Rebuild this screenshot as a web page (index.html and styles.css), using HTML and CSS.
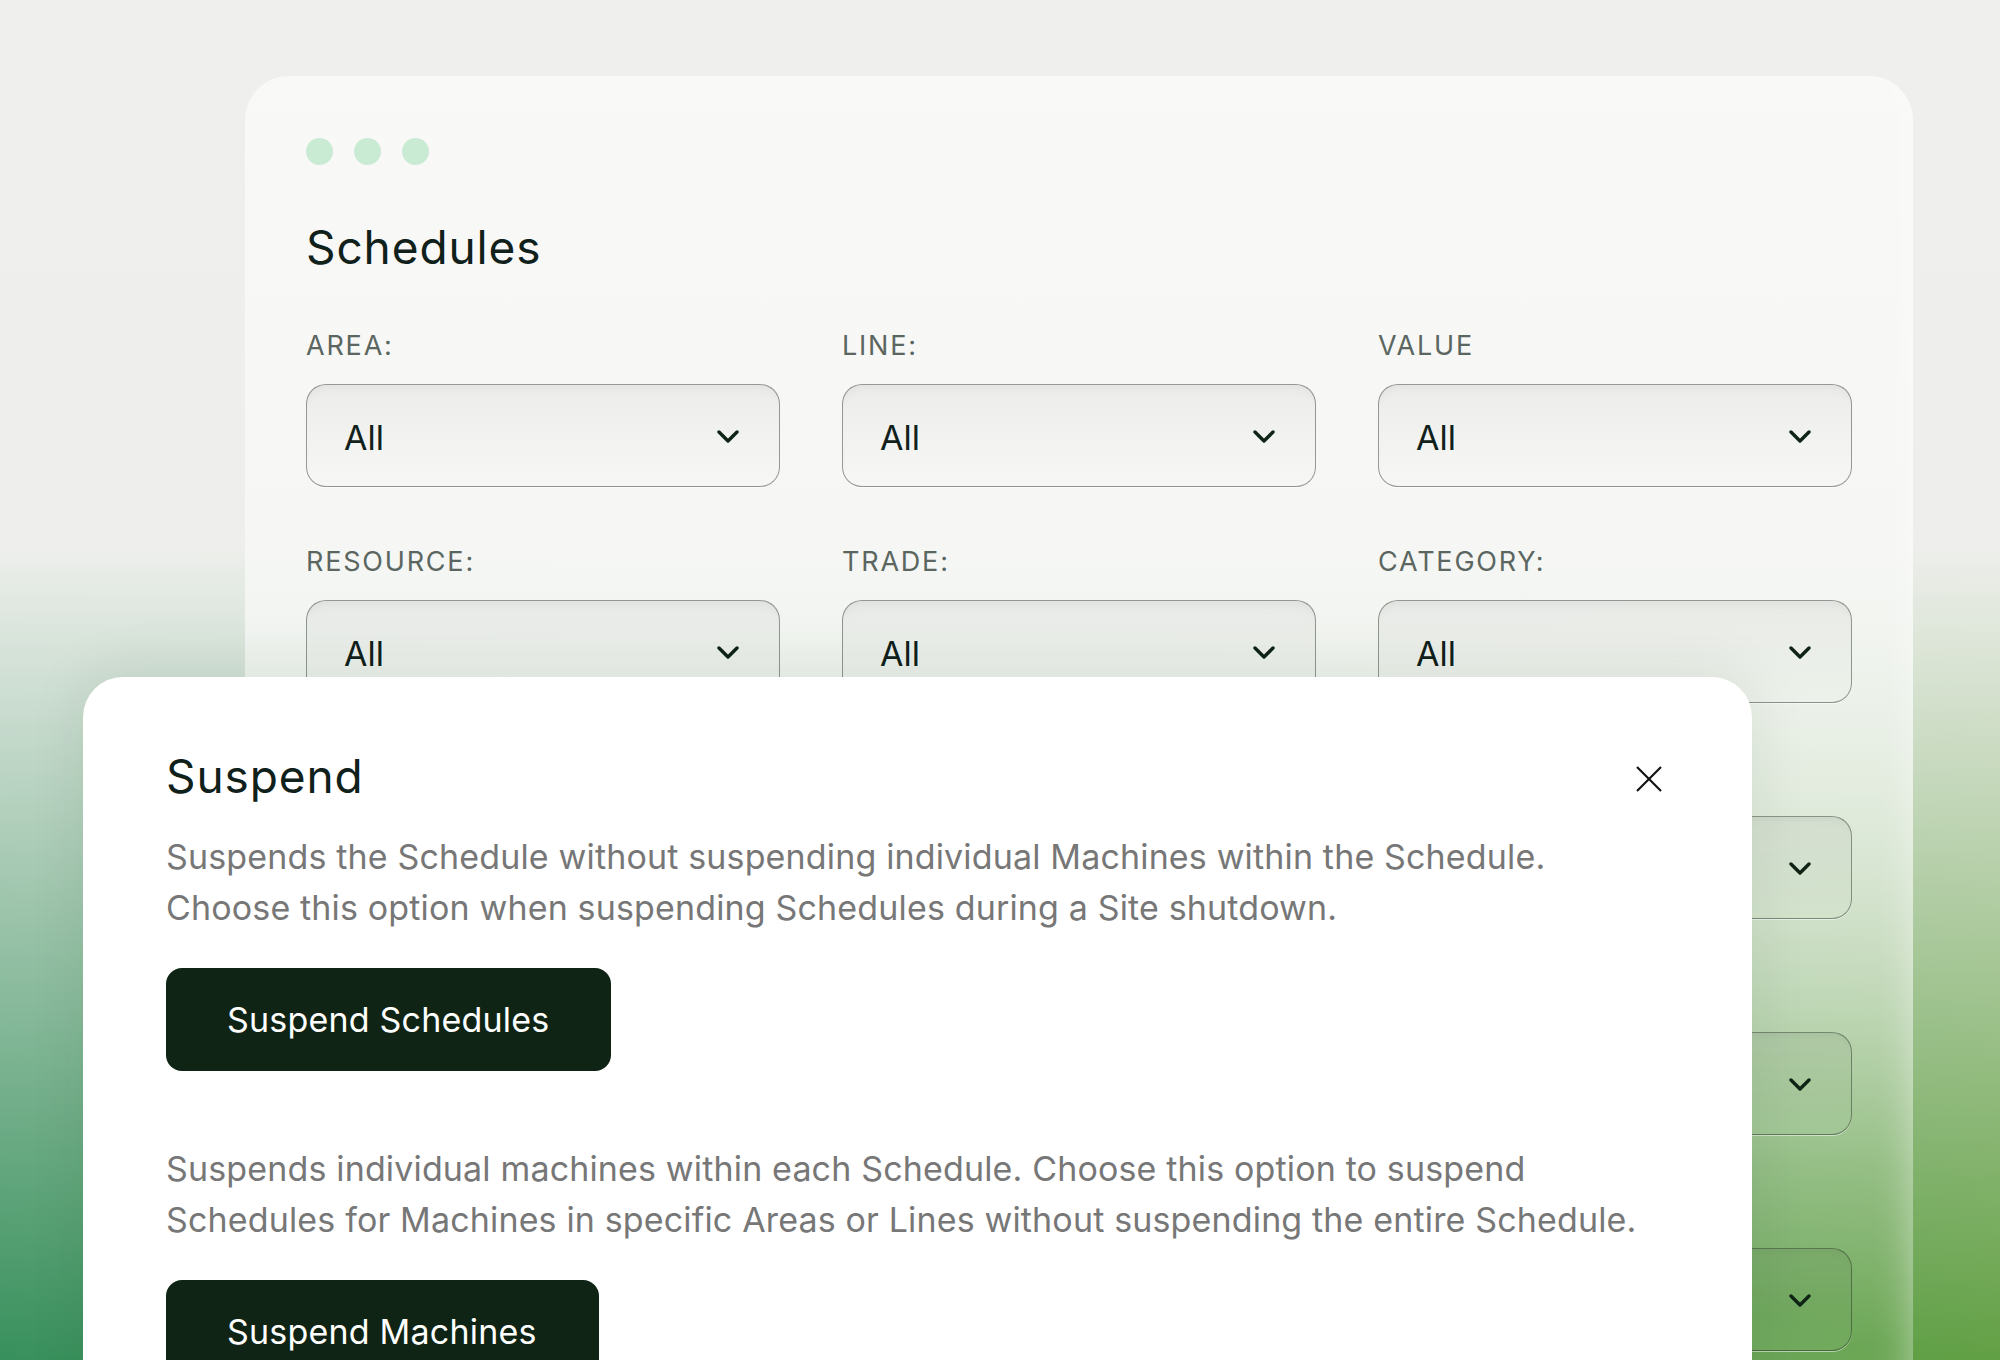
FILE: index.html
```html
<!DOCTYPE html>
<html lang="en">
<head>
    <meta charset="UTF-8">
    <meta name="viewport" content="width=device-width, initial-scale=1.0">
    <title>Schedules - Suspend</title>
    <link rel="stylesheet" href="styles.css">
</head>
<body>
    <div class="stage">
        <section class="window">
            <div class="window-dots">
                <span class="dot"></span>
                <span class="dot"></span>
                <span class="dot"></span>
            </div>

            <h1 class="window-title">Schedules</h1>

            <div class="filters">
                <div class="filter">
                    <div class="filter-label">AREA:</div>
                    <div class="select"><span>All</span><svg class="chevron" viewBox="0 0 22 13"><polyline points="2 2 11 11 20 2"></polyline></svg></div>
                </div>
                <div class="filter">
                    <div class="filter-label">LINE:</div>
                    <div class="select"><span>All</span><svg class="chevron" viewBox="0 0 22 13"><polyline points="2 2 11 11 20 2"></polyline></svg></div>
                </div>
                <div class="filter">
                    <div class="filter-label">VALUE</div>
                    <div class="select"><span>All</span><svg class="chevron" viewBox="0 0 22 13"><polyline points="2 2 11 11 20 2"></polyline></svg></div>
                </div>

                <div class="filter">
                    <div class="filter-label">RESOURCE:</div>
                    <div class="select"><span>All</span><svg class="chevron" viewBox="0 0 22 13"><polyline points="2 2 11 11 20 2"></polyline></svg></div>
                </div>
                <div class="filter">
                    <div class="filter-label">TRADE:</div>
                    <div class="select"><span>All</span><svg class="chevron" viewBox="0 0 22 13"><polyline points="2 2 11 11 20 2"></polyline></svg></div>
                </div>
                <div class="filter">
                    <div class="filter-label">CATEGORY:</div>
                    <div class="select"><span>All</span><svg class="chevron" viewBox="0 0 22 13"><polyline points="2 2 11 11 20 2"></polyline></svg></div>
                </div>

                <div class="filter">
                    <div class="filter-label">STATUS:</div>
                    <div class="select"><span>All</span><svg class="chevron" viewBox="0 0 22 13"><polyline points="2 2 11 11 20 2"></polyline></svg></div>
                </div>
                <div class="filter">
                    <div class="filter-label">FREQUENCY:</div>
                    <div class="select"><span>All</span><svg class="chevron" viewBox="0 0 22 13"><polyline points="2 2 11 11 20 2"></polyline></svg></div>
                </div>
                <div class="filter">
                    <div class="filter-label">PRIORITY:</div>
                    <div class="select"><span>All</span><svg class="chevron" viewBox="0 0 22 13"><polyline points="2 2 11 11 20 2"></polyline></svg></div>
                </div>

                <div class="filter">
                    <div class="filter-label">SHIFT:</div>
                    <div class="select"><span>All</span><svg class="chevron" viewBox="0 0 22 13"><polyline points="2 2 11 11 20 2"></polyline></svg></div>
                </div>
                <div class="filter">
                    <div class="filter-label">OWNER:</div>
                    <div class="select"><span>All</span><svg class="chevron" viewBox="0 0 22 13"><polyline points="2 2 11 11 20 2"></polyline></svg></div>
                </div>
                <div class="filter">
                    <div class="filter-label">TYPE:</div>
                    <div class="select"><span>All</span><svg class="chevron" viewBox="0 0 22 13"><polyline points="2 2 11 11 20 2"></polyline></svg></div>
                </div>

                <div class="filter">
                    <div class="filter-label">SITE:</div>
                    <div class="select"><span>All</span><svg class="chevron" viewBox="0 0 22 13"><polyline points="2 2 11 11 20 2"></polyline></svg></div>
                </div>
                <div class="filter">
                    <div class="filter-label">CREW:</div>
                    <div class="select"><span>All</span><svg class="chevron" viewBox="0 0 22 13"><polyline points="2 2 11 11 20 2"></polyline></svg></div>
                </div>
                <div class="filter">
                    <div class="filter-label">ZONE:</div>
                    <div class="select"><span>All</span><svg class="chevron" viewBox="0 0 22 13"><polyline points="2 2 11 11 20 2"></polyline></svg></div>
                </div>
            </div>
        </section>

        <div class="modal" role="dialog" aria-labelledby="suspendTitle">
            <div class="modal-head">
                <h2 class="modal-title" id="suspendTitle">Suspend</h2>
                <button class="modal-close" aria-label="Close">
                    <svg viewBox="0 0 26 26"><line x1="1" y1="1" x2="25" y2="25"></line><line x1="25" y1="1" x2="1" y2="25"></line></svg>
                </button>
            </div>

            <p class="modal-text">Suspends the Schedule without suspending individual Machines within the Schedule. Choose this option when suspending Schedules during a Site shutdown.</p>
            <button class="primary-button">Suspend Schedules</button>

            <p class="modal-text second">Suspends individual machines within each Schedule. Choose this option to suspend Schedules for Machines in specific Areas or Lines without suspending the entire Schedule.</p>
            <button class="primary-button">Suspend Machines</button>
        </div>
    </div>
</body>
</html>
```

FILE: styles.css
```css
*{margin:0;padding:0;box-sizing:border-box}
html,body{width:2000px;height:1360px;overflow:hidden}
body{font-family:Inter,'Noto Sans',sans-serif;color:#10201a;
    background:
        linear-gradient(180deg,#efefed 0%,#eeefec 40%,rgba(239,239,237,0) 100%),
        linear-gradient(90deg,#38905c 0%,#4a9856 50%,#62a044 100%)}

.stage{position:relative;height:1360px;padding:76px 87px 0 245px}

/* back window */
.window{height:100%;border-radius:44px 44px 0 0;padding:62px 61px 0;
    background:linear-gradient(180deg,rgba(249,249,248,.97) 0%,rgba(247,248,246,.92) 35%,rgba(240,245,238,.62) 60%,rgba(232,242,226,.2) 85%,rgba(255,255,255,.06) 100%);
    box-shadow:inset -28px 0 40px -30px rgba(255,255,255,.55)}
.window-dots{display:flex;gap:21px;height:27px}
.dot{width:27px;height:27px;border-radius:50%;background:#c9ead3}
.window-title{font-size:46px;font-weight:400;line-height:56px;margin-top:54px;letter-spacing:.9px}

.filters{display:grid;grid-template-columns:repeat(3,474px);column-gap:62px;row-gap:59px;margin-top:55px}
.filter-label{height:32px;font-size:27px;line-height:32px;letter-spacing:1.8px;color:#5b6661;margin-bottom:22px}
.select{height:103px;border:1.5px solid rgba(30,42,32,.45);border-radius:20px;display:flex;align-items:center;justify-content:space-between;padding:0 40px 0 37px;font-size:34px;
    background:linear-gradient(180deg,rgba(0,0,0,.045) 0%,rgba(0,0,0,.015) 60%,rgba(255,255,255,.05) 100%);
    box-shadow:inset 0 10px 14px -8px rgba(0,0,0,.06),0 1px 0 rgba(255,255,255,.5)}
.select span{margin-top:3px}
.chevron{width:22px;height:13px;fill:none;stroke:#0f2416;stroke-width:3.4;stroke-linecap:round;stroke-linejoin:round;margin-top:2px}

/* suspend dialog */
.modal{position:absolute;left:83px;top:677px;width:1669px;height:720px;background:#fff;border-radius:40px 40px 0 0;padding:71px 90px 0 83px;box-shadow:0 -6px 60px rgba(0,40,20,.08)}
.modal-head{display:flex;justify-content:space-between;align-items:center}
.modal-title{font-size:46px;font-weight:400;line-height:56px;letter-spacing:.9px}
.modal-close{border:none;background:0 0;width:26px;height:26px;display:flex;cursor:pointer;margin-top:6px}
.modal-close svg{width:26px;height:26px;stroke:#111;stroke-width:2.2}

.modal-text{font-size:34px;line-height:51px;color:#777;letter-spacing:.15px;margin-top:27px}
.modal-text.second{margin-top:72px}

.primary-button{display:flex;align-items:center;height:103px;padding:0 62px 0 61px;margin-top:35px;border:none;border-radius:16px;background:#0f2415;color:#fff;font-family:inherit;font-size:34px;letter-spacing:.2px;cursor:pointer}
```
